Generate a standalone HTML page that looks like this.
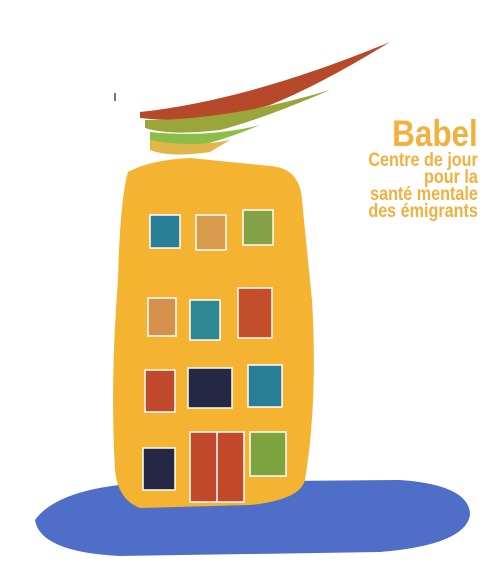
<html><head><style>body{margin:0;background:#fff;width:500px;height:585px;overflow:hidden;position:relative;font-family:"Liberation Sans",sans-serif}
.t{position:absolute;right:22px;text-align:right;color:#f2b03e;font-weight:bold;transform-origin:right top;transform:scaleX(.85);white-space:nowrap}
</style></head><body>
<svg width="500" height="585" style="position:absolute;left:0;top:0">
<path d="M35 520 Q60 485 160 482 L400 480 Q470 485 470 515 Q465 545 380 552 L120 556 Q40 552 35 520Z" fill="#4f6ec8"/>
<path d="M140 112 Q250 100 390 42 Q320 85 270 105 Q200 125 140 118Z" fill="#b5492a"/>
<path d="M145 120 Q230 120 330 90 Q260 120 220 130 Q170 136 145 128Z" fill="#9aa53a"/>
<path d="M150 132 Q210 138 260 125 Q220 142 180 150 Q160 152 150 142Z" fill="#8bbd48"/>
<path d="M150 140 Q190 148 230 140 L210 152 Q170 158 150 150Z" fill="#e3b64a"/>
<path d="M128 172 Q150 160 190 158 L270 166 Q300 168 302 200 L312 300 Q318 400 305 480 Q300 500 250 505 L140 508 Q118 500 115 470 Q110 380 118 280 Q120 200 128 172Z" fill="#f5b332"/>
<g stroke="#fff" stroke-width="1.5">
<rect x="150" y="215" width="30" height="33" fill="#2a7f98"/>
<rect x="196" y="215" width="30" height="35" fill="#d89a4b"/>
<rect x="243" y="210" width="30" height="35" fill="#84a245"/>
<rect x="148" y="298" width="28" height="38" fill="#d5914c"/>
<rect x="190" y="300" width="30" height="40" fill="#2d8893"/>
<rect x="238" y="288" width="34" height="50" fill="#c24e2c"/>
<rect x="145" y="370" width="30" height="42" fill="#c24a2c"/>
<rect x="188" y="368" width="44" height="40" fill="#242844"/>
<rect x="248" y="365" width="34" height="42" fill="#2a7f98"/>
<rect x="143" y="448" width="32" height="42" fill="#242844"/>
<rect x="190" y="432" width="54" height="70" fill="#c2492c"/>
<line x1="217" y1="432" x2="217" y2="502"/>
<rect x="250" y="432" width="36" height="44" fill="#7ea440"/>
</g>
<rect x="114" y="93" width="2" height="8" fill="#777"/>
</svg>
<div class="t" style="top:113px;font-size:37px">Babel</div>
<div class="t" style="top:152px;font-size:19px;line-height:17px">Centre de jour<br>pour la<br>santé mentale<br>des émigrants</div>
</body></html>
